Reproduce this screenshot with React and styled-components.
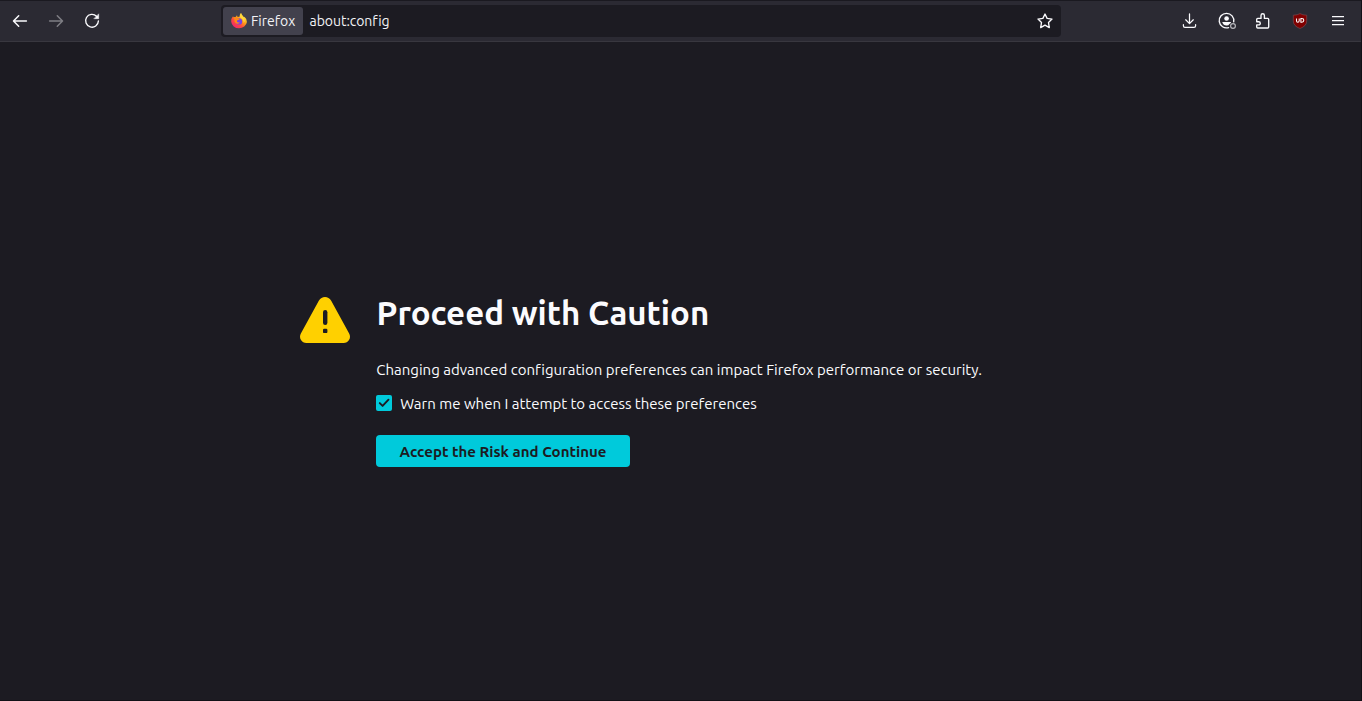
import React from "react";
import styled, { createGlobalStyle } from "styled-components";

const GlobalStyle = createGlobalStyle`
  * { box-sizing: border-box; }
  body { margin: 0; background: #1c1b22; font-family: Ubuntu, "Noto Sans", "Open Sans", sans-serif; font-variant-ligatures: none; color: #fbfbfe; }
`;

const Window = styled.div`
  display: flex;
  flex-direction: column;
  height: 100vh;
  overflow: hidden;
  border-bottom: 1px solid #121117;
  border-right: 1px solid #121117;
`;

const Toolbar = styled.header`
  display: flex;
  align-items: center;
  height: 42px;
  flex: none;
  padding-left: 4px;
  background: #2b2a33;
  border-top: 1px solid #1a1920;
  border-bottom: 1px solid #38373f;
`;

const IconButton = styled.button`
  display: flex;
  align-items: center;
  justify-content: center;
  flex: none;
  width: ${(p) => p.$width || 32}px;
  height: 32px;
  padding: 0;
  border: 0;
  background: none;
  color: #fbfbfe;
  opacity: ${(p) => (p.$dim ? 0.4 : 1)};
`;

const Navigation = styled.nav`
  display: flex;
  gap: 4px;
  width: 217px;
`;

const UrlBar = styled.div`
  display: flex;
  align-items: center;
  width: 840px;
  height: 32px;
  padding: 2px 0 2px 2px;
  border-radius: 4px;
  background: #1c1b22;
  color: #f3f3f6;
  font-size: 14px;
`;

const Identity = styled.div`
  display: flex;
  align-items: center;
  gap: 4px;
  width: 80px;
  height: 28px;
  padding-left: 8px;
  border-radius: 3px;
  background: #42414d;
`;

const Address = styled.span`
  flex: 1;
  padding-left: 6.5px;
  letter-spacing: -0.04px;
`;

const Actions = styled.div`
  display: flex;
  gap: 4px;
  margin-left: 113px;
`;

const Page = styled.main`
  display: flex;
  align-items: flex-start;
  gap: 26px;
  padding: 250px 0 0 300px;
`;

const WarningIcon = styled.svg`
  display: block;
  flex: none;
  margin-top: 5px;
`;

const Title = styled.h1`
  margin: 0;
  height: 42px;
  padding-left: 0.5px;
  font-size: 33px;
  line-height: 42px;
  font-weight: 600;
  white-space: nowrap;
`;

const Description = styled.p`
  margin: 24px 0 0;
  padding-left: 0.3px;
  font-size: 15px;
  line-height: 24px;
  white-space: nowrap;
`;

const CheckRow = styled.label`
  display: flex;
  align-items: center;
  gap: 8.3px;
  margin-top: 9px;
  height: 24px;
  font-size: 15px;
  white-space: nowrap;
`;

const Checkbox = styled.span`
  display: flex;
  width: 16px;
  height: 16px;
  border-radius: 2px;
  background: #00cadb;
`;

const AcceptButton = styled.button`
  display: block;
  width: 254px;
  height: 32px;
  margin-top: 20px;
  padding: 0;
  border: 0;
  border-radius: 4px;
  background: #00cadb;
  color: #1c1b22;
  font-family: inherit;
  font-size: 15px;
  font-weight: 700;
  letter-spacing: 0.02px;
  white-space: nowrap;
`;

const Glyph = ({ children, size = 16 }) => (
  <svg width={size} height={size} viewBox={`0 0 ${size} ${size}`} fill="none" stroke="currentColor" strokeWidth="1.35" strokeLinecap="round" strokeLinejoin="round">
    {children}
  </svg>
);

const FirefoxLogo = () => (
  <svg width="16" height="16" viewBox="0 0 16 16">
    <defs>
      <linearGradient id="flame" x1="0.85" y1="0.1" x2="0.2" y2="0.9">
        <stop offset="0" stopColor="#fff44f" />
        <stop offset="0.4" stopColor="#ffa016" />
        <stop offset="0.7" stopColor="#ff4a3f" />
        <stop offset="1" stopColor="#f02a6a" />
      </linearGradient>
    </defs>
    <path d="M2 3.2 2.7 4.3Q3.6 3.8 4.6 4L6 2.2 6.6 4Q8 3.5 8.5 3.8 8.5 1.5 10 0 10.5 2 12 3.2L13 4.5 13.4 3.7Q15.9 5.7 15.9 9A7.9 7.2 0 0 1 .2 8.8Q0 5.2 2 3.2Z" fill="url(#flame)" />
    <circle cx="8" cy="8.4" r="3.2" fill="#7542e5" />
    <path d="M2.7 4.3Q5 3.6 6.5 5.3L8.8 5.8Q8.4 7 6.8 7.1 5.6 7.6 6 8.7 7.2 10 9 9.2 7.9 11.3 5.7 10.7 3 9.5 3.5 6.8Z" fill="#ff8a16" />
    <path d="M10 0Q10.5 2 12 3.2 14 5 13.8 8.2L12.6 10.1Q13 6.4 10 5 8 3.5 10 0Z" fill="#ffd83c" />
  </svg>
);

export default function App() {
  return (
    <>
      <GlobalStyle />
      <Window>
        <Toolbar>
          <Navigation>
            <IconButton aria-label="Back">
              <Glyph><path d="M14.4 8H1.7M6.7 2.8 1.5 8l5.2 5.2" strokeWidth="1.5" /></Glyph>
            </IconButton>
            <IconButton aria-label="Forward" $dim>
              <Glyph><path d="M1.6 8h12.7M9.3 2.8 14.5 8l-5.2 5.2" strokeWidth="1.5" /></Glyph>
            </IconButton>
            <IconButton aria-label="Reload">
              <Glyph>
                <path d="M12.5 3.2A6.4 6.4 0 1 0 14.4 8" strokeWidth="1.4" />
                <path d="M14.7 1.2v4.5h-4.5z" fill="currentColor" strokeWidth=".5" />
              </Glyph>
            </IconButton>
          </Navigation>
          <UrlBar>
            <Identity><FirefoxLogo /><span>Firefox</span></Identity>
            <Address>about:config</Address>
            <IconButton aria-label="Bookmark">
              <Glyph><path d="M8 1 10.1 5.4 15 6.1 11.5 9.6 12.3 14.6 8 12.2 3.7 14.6 4.5 9.6 1 6.1 5.9 5.4Z" /></Glyph>
            </IconButton>
          </UrlBar>
          <Actions>
            <IconButton aria-label="Downloads">
              <Glyph><path d="M7.5.9v9.5M3.7 6.8 7.5 10.6l3.8-3.8M1.4 11.7v1.1q0 1.6 1.6 1.6h9q1.6 0 1.6-1.6v-1.1" strokeWidth="1.25" /></Glyph>
            </IconButton>
            <IconButton aria-label="Account" $width={34}>
              <Glyph size={18}>
                <path d="M10.6 15.6A7.3 7.3 0 1 1 15.7 9.8" />
                <circle cx="8.6" cy="6.5" r="2.3" fill="currentColor" stroke="none" />
                <path d="M4.2 10h8.9q-.3 1.4-1.7 2-.7 1.6-2.8 1.6-3.3 0-4.4-3.6Z" fill="currentColor" stroke="none" />
                <circle cx="15" cy="14" r="2.4" stroke="#b5b5ba" strokeWidth="1.2" />
              </Glyph>
            </IconButton>
            <IconButton aria-label="Extensions">
              <Glyph><path d="M.7 6.4q0-1 1-1H5V2.4a1.7 1.7 0 0 1 3.4 0V5.4h3.3q1 0 1 1V14q0 1-1 1H1.7q-1 0-1-1V11.9H2.7a1.6 1.6 0 0 0 0-3.2H.7Z" /></Glyph>
            </IconButton>
            <IconButton aria-label="uBlock Origin">
              <svg width="16" height="16" viewBox="0 0 16 16">
                <path d="M8 .6Q10.5 2.1 14.7 2.2V8q0 5-6.7 7.5Q1.3 13 1.3 8V2.2Q5.5 2.1 8 .6Z" fill="#800000" stroke="#78474d" strokeWidth=".7" />
                <path d="M4.5 5.5v2.3q0 1.5 1.3 1.5T7.2 7.8V5.5M8.9 5.5v3.7h.9q2 0 2-1.85T9.8 5.5Z" fill="none" stroke="#fff" strokeWidth="1.05" />
              </svg>
            </IconButton>
            <IconButton aria-label="Menu" $width={36}>
              <Glyph><path d="M2 3.5h12M2 7.5h12M2 11.5h12" strokeWidth="1.25" strokeLinecap="butt" /></Glyph>
            </IconButton>
          </Actions>
        </Toolbar>
        <Page>
          <WarningIcon width="50" height="46" viewBox="0 0 50 46">
            <path d="M18.8 3.7Q21.2 0 25 0T31.2 3.7L49 36.2Q51 40 49 43 47.2 46 43.6 46H6.4Q2.8 46 1 43-1 40 1 36.2Z" fill="#ffd000" />
            <path d="M25.2 15.2v10.6" stroke="#1c1b22" strokeWidth="4.4" strokeLinecap="round" />
            <rect x="23" y="31.7" width="4.4" height="4.4" rx="1.2" fill="#1c1b22" />
          </WarningIcon>
          <div>
            <Title>Proceed with Caution</Title>
            <Description>Changing advanced configuration preferences can impact Firefox performance or security.</Description>
            <CheckRow>
              <Checkbox>
                <svg width="16" height="16" viewBox="0 0 16 16"><path d="m3.8 8.1 2.8 2.8 5.9-6.2" fill="none" stroke="#1c1b22" strokeWidth="1.9" strokeLinecap="round" strokeLinejoin="round" /></svg>
              </Checkbox>
              <span>Warn me when I attempt to access these preferences</span>
            </CheckRow>
            <AcceptButton>Accept the Risk and Continue</AcceptButton>
          </div>
        </Page>
      </Window>
    </>
  );
}
